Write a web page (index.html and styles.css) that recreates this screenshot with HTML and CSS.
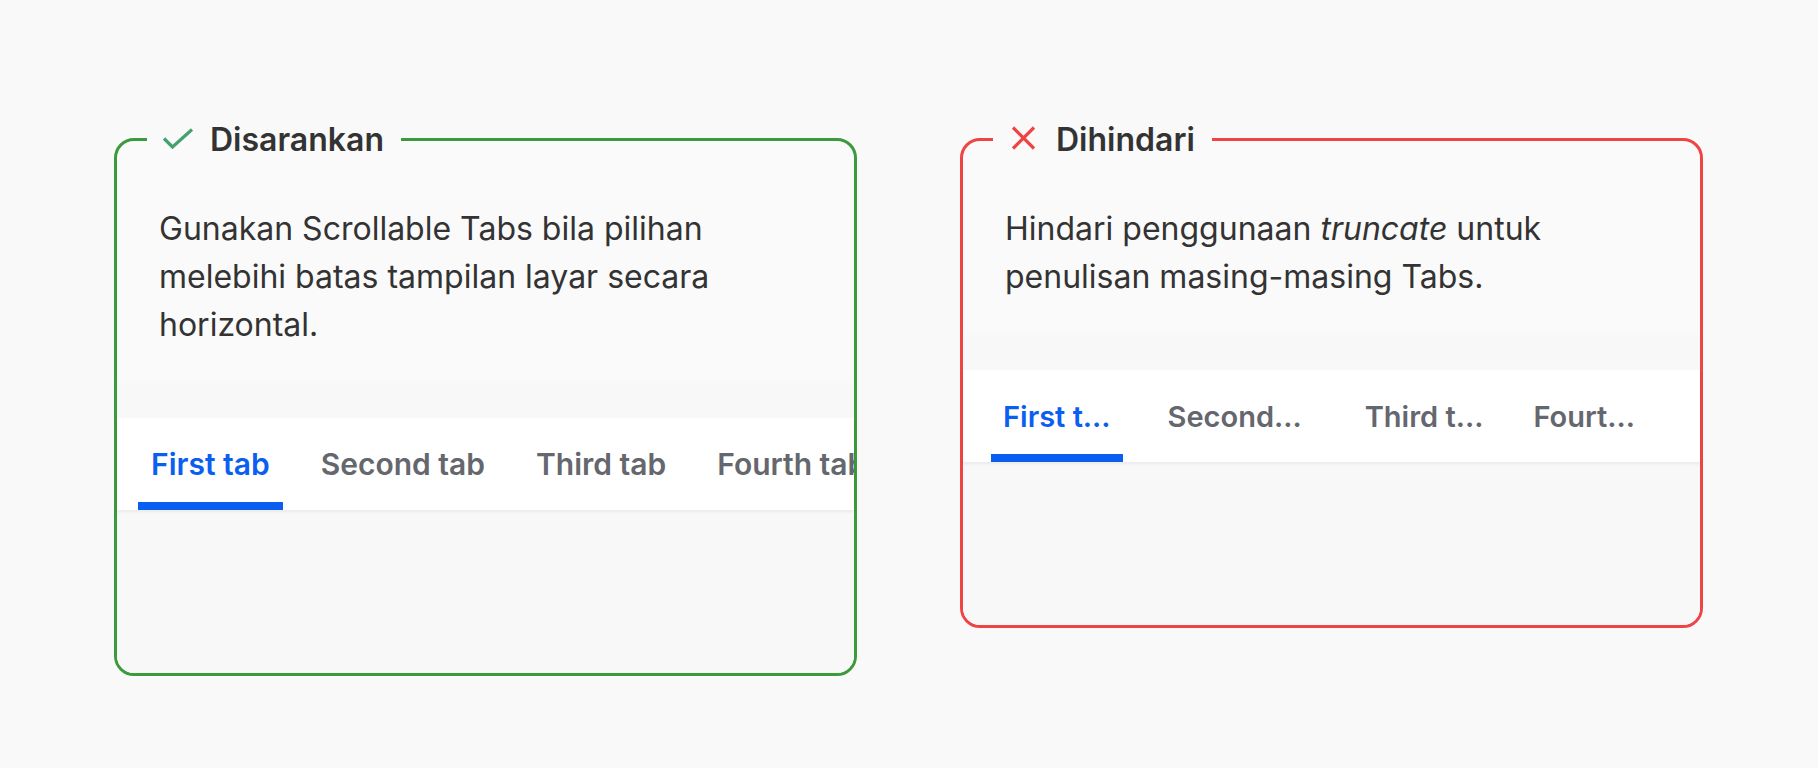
FILE: index.html
```html
<!DOCTYPE html>
<html lang="id">
<head>
  <meta charset="UTF-8">
  <title>Tabs - Do and Don't</title>
  <link rel="stylesheet" href="styles.css">
</head>
<body>

<div class="page">

  <!-- Disarankan -->
  <fieldset class="card card-do">
    <legend class="card-label">
      <svg class="card-icon" width="32" height="32" viewBox="0 0 32 32">
        <path d="M2 14.5 L10.5 23 L30 5.5" fill="none" stroke="#43a26e" stroke-width="3.2"/>
      </svg>
      <span>Disarankan</span>
    </legend>
    <p class="card-text">Gunakan Scrollable Tabs bila pilihan melebihi batas tampilan layar secara horizontal.</p>
    <div class="preview">
      <div class="tabs">
        <div class="tab tab-active">First tab</div>
        <div class="tab">Second tab</div>
        <div class="tab">Third tab</div>
        <div class="tab">Fourth tab</div>
        <div class="tab">Fifth tab</div>
      </div>
    </div>
  </fieldset>

  <!-- Dihindari -->
  <fieldset class="card card-dont">
    <legend class="card-label">
      <svg class="card-icon" width="32" height="32" viewBox="0 0 32 32">
        <path d="M5 3.5 L26 24.5 M26 3.5 L5 24.5" fill="none" stroke="#ef4444" stroke-width="3.2"/>
      </svg>
      <span>Dihindari</span>
    </legend>
    <p class="card-text">Hindari penggunaan <em>truncate</em> untuk penulisan masing-masing Tabs.</p>
    <div class="preview">
      <div class="tabs tabs-truncated">
        <div class="tab tab-active">First t…</div>
        <div class="tab">Second…</div>
        <div class="tab">Third t…</div>
        <div class="tab">Fourt…</div>
      </div>
    </div>
  </fieldset>

</div>

</body>
</html>
```

FILE: styles.css
```css
body {
  margin: 0;
  background-color: #f9f9f9;
  font-family: Inter, "Noto Sans", sans-serif;
  color: #333333;
}
.page {
  display: flex;
  align-items: flex-start;
  gap: 103px;
  padding: 122px 0 0 114px;
}
.card {
  width: 743px;
  min-width: 0;
  box-sizing: border-box;
  margin: 0;
  padding: 0;
  border: 3px solid;
  border-radius: 20px;
  background-color: #fafafa;
}
.card-do {
  border-color: #3b9a3b;
}
.card-dont {
  border-color: #ef4444;
}
.card-label {
  display: flex;
  align-items: center;
  gap: 16px;
  height: 35px;
  margin-left: 30px;
  padding: 0 17px 0 15px;
  font-size: 32px;
  font-weight: 600;
  line-height: 35px;
  color: #333333;
}
.card-icon {
  display: block;
  flex: none;
}
.card-text {
  max-width: 620px;
  margin: 48px 0 0;
  padding: 0 42px;
  font-size: 32px;
  line-height: 48px;
}
.preview {
  margin-top: 34px;
  padding: 35px 0 163px;
  background-color: #f8f8f8;
  border-radius: 0 0 17px 17px;
}
.tabs {
  display: flex;
  height: 92px;
  padding-left: 21px;
  background: white;
  box-shadow: 0 2px 3px rgba(0,0,0,0.06);
  overflow: hidden;
}
.tab {
  flex: none;
  display: flex;
  align-items: center;
  padding: 0 13px;
  margin-right: 25px;
  font-size: 30px;
  font-weight: 600;
  color: #64676d;
  white-space: nowrap;
}
.tab-active {
  color: #0b5ff0;
  box-shadow: inset 0 -8px 0 #0a5ef0;
}
.tabs-truncated {
  padding-left: 28px;
}
.tabs-truncated .tab {
  padding: 0 12px;
  font-size: 29px;
}
.tabs-truncated .tab:nth-child(1) {
  margin-right: 33px;
}
.tabs-truncated .tab:nth-child(2) {
  margin-right: 39px;
}
.tabs-truncated .tab:nth-child(3) {
  margin-right: 26px;
}
```
